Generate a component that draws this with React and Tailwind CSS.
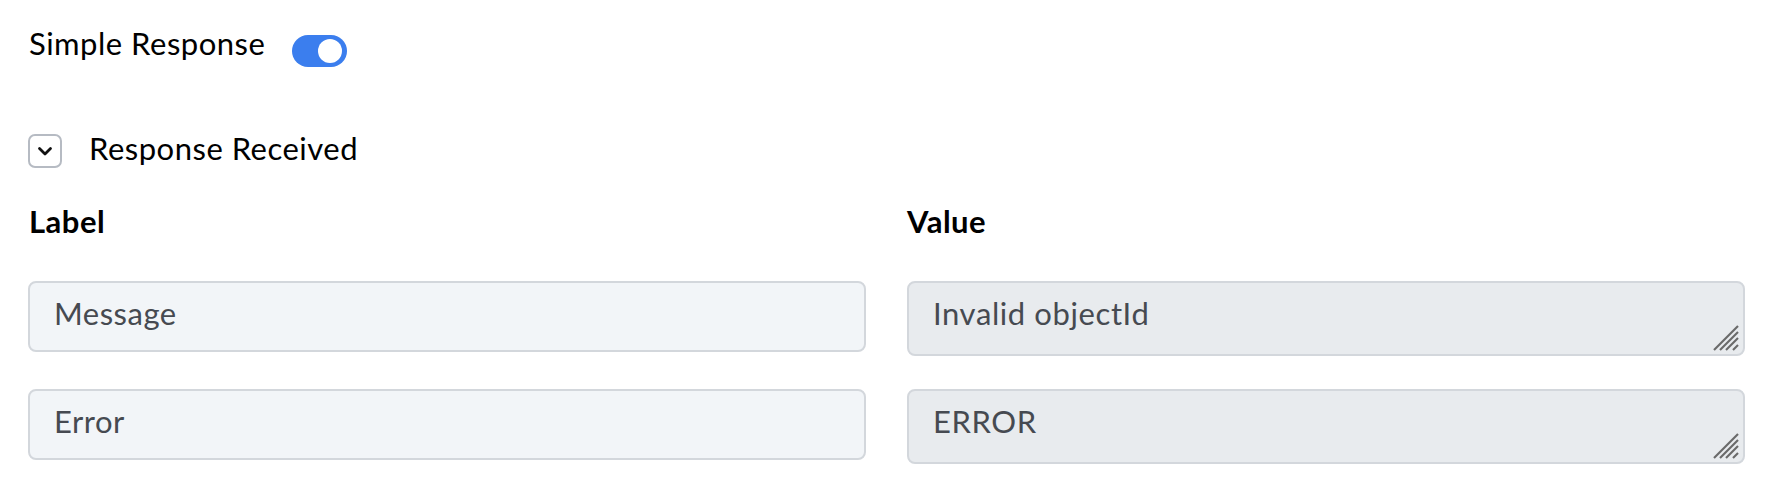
import React from "react";

function Grip() {
  return (
    <svg
      className="absolute right-[4px] bottom-[3px]"
      width="26"
      height="26"
      viewBox="0 0 26 26"
    >
      <g stroke="#6a6a6a" strokeWidth="2.2" strokeLinecap="butt">
        <line x1="1" y1="25" x2="25" y2="1" />
        <line x1="7" y1="25" x2="25" y2="7" />
        <line x1="13" y1="25" x2="25" y2="13" />
        <line x1="20" y1="25" x2="25" y2="20" />
      </g>
    </svg>
  );
}

function LabelBox({ text }) {
  return (
    <div className="h-[71px] rounded-[8px] border-2 border-[#d3d7dc] bg-[#f2f5f8] pl-[24px] pt-[12px] text-[31px] leading-[36px] tracking-[0.5px] text-[#464a51]">
      {text}
    </div>
  );
}

function ValueBox({ text }) {
  return (
    <div className="relative h-[75px] rounded-[8px] border-2 border-[#d3d7dc] bg-[#e8ebee] pl-[24px] pt-[12px] text-[31px] leading-[36px] tracking-[0.6px] text-[#464a51]">
      {text}
      <Grip />
    </div>
  );
}

export default function App() {
  return (
    <div
      className="min-h-[494px] bg-white pl-[28px] pr-[37px] pt-[25px] text-black"
      style={{ fontFamily: "Lato, 'Open Sans', sans-serif" }}
    >
      <div className="flex items-start">
        <span className="pl-[1px] text-[31px] leading-[36px] tracking-[0.5px]">Simple Response</span>
        <div className="ml-[27px] mt-[10px] flex h-[32px] w-[55px] items-center justify-end rounded-full bg-[#3b7eee] pr-[5px]">
          <div className="h-[24px] w-[24px] rounded-full bg-white" />
        </div>
      </div>

      <div className="mt-[61px] flex items-start">
        <div className="mt-[6px] flex h-[34px] w-[34px] items-center justify-center rounded-[7px] border-2 border-[#b6bbc3] bg-white">
          <svg width="16" height="11" viewBox="0 0 16 11">
            <polyline
              points="2.5,2.5 8,8 13.5,2.5"
              fill="none"
              stroke="#111"
              strokeWidth="2.8"
              strokeLinecap="round"
              strokeLinejoin="round"
            />
          </svg>
        </div>
        <span className="ml-[27px] mt-[2px] text-[31px] leading-[36px] tracking-[0.5px]">Response Received</span>
      </div>

      <div className="mt-[35px] grid grid-cols-2 gap-x-[41px]">
        <div className="pl-[1px] text-[31px] font-bold leading-[36px] tracking-[0.5px]">Label</div>
        <div className="text-[31px] font-bold leading-[36px] tracking-[0.5px]">Value</div>
      </div>

      <div className="mt-[42px] grid grid-cols-2 items-start gap-x-[41px] gap-y-[33px]">
        <LabelBox text="Message" />
        <ValueBox text="Invalid objectId" />
        <LabelBox text="Error" />
        <ValueBox text="ERROR" />
      </div>
    </div>
  );
}
